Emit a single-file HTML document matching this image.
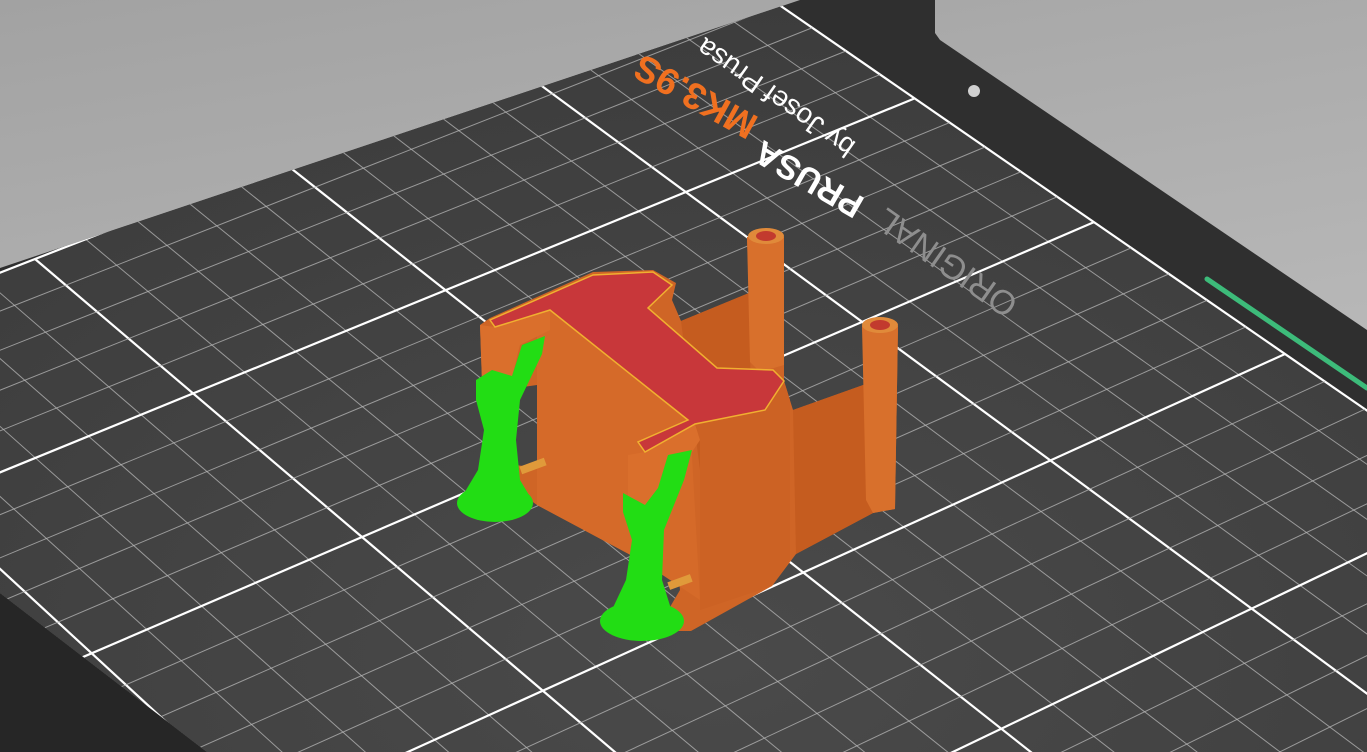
<!DOCTYPE html>
<html><head><meta charset="utf-8">
<style>
html,body{margin:0;padding:0;width:1367px;height:752px;overflow:hidden;background:#b0b0b0}
svg{display:block}
</style></head>
<body>
<svg id="s" width="1367" height="752" viewBox="0 0 1367 752" xmlns="http://www.w3.org/2000/svg">
<defs>
<linearGradient id="bg" x1="0" y1="0" x2="0.3" y2="1">
<stop offset="0" stop-color="#a2a2a2"/><stop offset="1" stop-color="#c2c2c2"/>
</linearGradient>
<radialGradient id="bedg" cx="0.5" cy="0.55" r="0.7">
<stop offset="0" stop-color="#4a4a4a"/><stop offset="1" stop-color="#383838"/>
</radialGradient>
<clipPath id="bedclip"><polygon points="0,268 800,0 935,0 935,33 940,40 1367,330 1367,752 207,752 0,593"/></clipPath>
</defs>
<rect width="1367" height="752" fill="url(#bg)"/>
<polygon points="0,268 800,0 935,0 935,33 940,40 1367,330 1367,752 207,752 0,593" fill="#2f2f2f"/>
<polygon points="0,593 207,752 0,752" fill="#262626"/>
<g clip-path="url(#bedclip)">
<polygon id="area" fill="url(#bedg)"/>
<g id="grid"></g>
</g>
<circle cx="974" cy="91" r="6" fill="#d0d0d0"/>
<line x1="1207" y1="279" x2="1367" y2="388" stroke="#3dbb7a" stroke-width="5" stroke-linecap="round"/>

<!-- bed text -->
<g font-family="Liberation Sans, sans-serif">
<text transform="translate(1020,300) rotate(215)" font-size="34" fill="#8e8e8e">ORIGINAL</text>
<text transform="translate(866,199) rotate(210)" font-size="34" font-weight="bold" fill="#ffffff">PRUSA</text>
<text transform="translate(760,118) rotate(209)" font-size="37" font-weight="bold" fill="#f07020">MK3.9S</text>
<text transform="translate(857,143) rotate(215)" font-size="28" fill="#ffffff">by Josef Prusa</text>
</g>

<!-- model -->
<g>
<polygon fill="#cf6526" points="480,325 490,318 593,272 653,270 676,283 672,300 681,321 749,293 747,237 766,234 784,237 784,365 784,381 793,410 866,384 862,326 880,322 898,326 895,509 873,513 796,554 772,586 691,631 675,631 670,607 680,590 672,510 645,516 628,509 640,560 537,505 516,490 516,465 537,468 537,385 509,389 482,382"/>
<polygon fill="#c55c1f" points="681,321 749,293 752,470 700,470"/>
<polygon fill="#c55c1f" points="793,410 866,384 873,513 796,554"/>
<polygon fill="#d8702c" points="747,237 784,237 784,365 760,372 750,362"/>
<polygon fill="#d8702c" points="862,326 898,326 895,509 873,513 866,500"/>
<ellipse cx="766" cy="236" rx="18" ry="8" fill="#e08a3a"/>
<ellipse cx="766" cy="236" rx="10" ry="5" fill="#c23a2e"/>
<ellipse cx="880" cy="325" rx="18" ry="8" fill="#e08a3a"/>
<ellipse cx="880" cy="325" rx="10" ry="5" fill="#c23a2e"/>
<polygon fill="#d56a29" points="537,317 550,310 690,420 700,600 640,560 537,505"/>
<polygon fill="#cc6224" points="695,424 765,410 784,381 790,400 790,560 772,586 700,610 700,440"/>
<polygon fill="#da6f2c" points="480,325 495,327 550,310 550,330 520,345 509,389 482,382"/>
<polygon fill="#da6f2c" points="628,455 645,452 695,424 700,440 680,470 672,510 645,516 628,509"/>
<polygon fill="#c8373a" stroke="#f0b030" stroke-width="1.5" points="490,320 593,275 653,272 672,285 648,308 717,368 773,370 784,381 765,410 695,424 645,452 638,442 688,420 550,310 495,327"/>
<rect x="520" y="462" width="26" height="8" fill="#e09a3a" transform="rotate(-20 533 466)"/>
<rect x="668" y="578" width="24" height="8" fill="#e09a3a" transform="rotate(-20 680 582)"/>
</g>

<!-- supports -->
<g fill="#22dd14">
<ellipse cx="495" cy="503" rx="38" ry="19"/>
<polygon points="476,380 492,370 512,376 522,345 545,336 542,354 520,400 516,440 520,480 532,500 460,500 478,470 484,430 476,400"/>
<ellipse cx="642" cy="621" rx="42" ry="20"/>
<polygon points="623,493 645,505 658,488 668,455 692,450 684,480 664,530 662,580 672,612 610,614 626,580 632,540 623,512"/>
</g>
</svg>
<script>
(function(){
var src=[[0,0],[150,0],[150,100],[0,150]];
var dst=[[746,-18],[35,259],[362,537],[1285,354]];
var A=[],b=[];
for(var i=0;i<4;i++){var u=src[i][0],v=src[i][1],x=dst[i][0],y=dst[i][1];
A.push([u,v,1,0,0,0,-u*x,-v*x]);b.push(x);
A.push([0,0,0,u,v,1,-u*y,-v*y]);b.push(y);}
var n=8;
for(var c=0;c<n;c++){var p=c;for(var r=c+1;r<n;r++)if(Math.abs(A[r][c])>Math.abs(A[p][c]))p=r;
var t=A[c];A[c]=A[p];A[p]=t;t=b[c];b[c]=b[p];b[p]=t;
for(var r=0;r<n;r++){if(r===c)continue;var f=A[r][c]/A[c][c];for(var k=c;k<n;k++)A[r][k]-=f*A[c][k];b[r]-=f*b[c];}}
var h=[];for(var i=0;i<n;i++)h.push(b[i]/A[i][i]);
function M(u,v){var w=h[6]*u+h[7]*v+1;return[(h[0]*u+h[1]*v+h[2])/w,(h[3]*u+h[4]*v+h[5])/w];}
var U=210,V=250,ns="http://www.w3.org/2000/svg",g=document.getElementById('grid');
var c1=M(0,0),c2=M(U,0),c3=M(U,V),c4=M(0,V);
document.getElementById('area').setAttribute('points',[c1,c2,c3,c4].map(function(p){return p[0].toFixed(1)+','+p[1].toFixed(1)}).join(' '));
function ln(a,b2,maj){var l=document.createElementNS(ns,'line');
l.setAttribute('x1',a[0]);l.setAttribute('y1',a[1]);l.setAttribute('x2',b2[0]);l.setAttribute('y2',b2[1]);
l.setAttribute('stroke',maj?'#ffffff':'#b8b8b8');l.setAttribute('stroke-width',maj?2.2:1);
if(!maj)l.setAttribute('stroke-opacity','0.75');g.appendChild(l);}
for(var u=0;u<=U;u+=10){var maj=(u%50===0)||u===U;ln(M(u,0),M(u,V),maj);}
for(var v=0;v<=V;v+=10){var maj=(v%50===0)||v===V;ln(M(0,v),M(U,v),maj);}
})();
</script>
</body></html>
